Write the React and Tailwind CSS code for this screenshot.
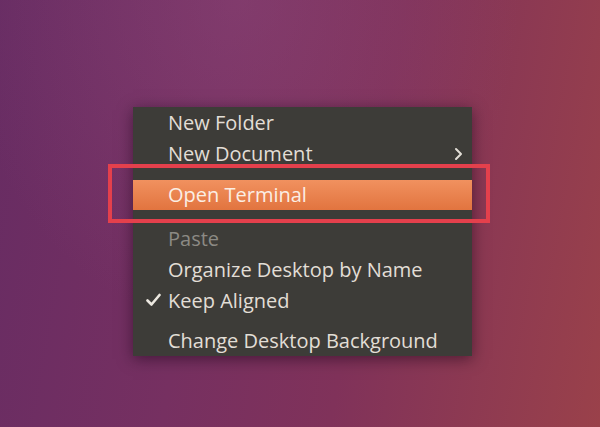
import React from "react";

const Item = ({ label, disabled, checked, submenu, active }) => {
  return (
    <div
      className={
        "relative flex items-center pl-[35px] pr-[10px] " +
        (active
          ? "h-[30px] bg-[linear-gradient(#f1915f,#e2743f)] text-[#fbeee4]"
          : "h-[31px] " + (disabled ? "text-[#8c8a84]" : "text-[#e2ded6]"))
      }
    >
      {checked && (
        <svg
          className="absolute left-[13px] top-[8px]"
          width="15"
          height="14"
          viewBox="0 0 15 14"
        >
          <path
            d="M1.5 7.5 L5.5 11.5 L13.5 2"
            fill="none"
            stroke="#ece8e0"
            strokeWidth="2.6"
            strokeLinecap="round"
            strokeLinejoin="round"
          />
        </svg>
      )}
      <span className="flex-1 whitespace-nowrap">{label}</span>
      {submenu && (
        <svg width="9" height="14" viewBox="0 0 9 14" className="mr-[-1px]">
          <path
            d="M2 2 L7 7 L2 12"
            fill="none"
            stroke="#e2ded6"
            strokeWidth="2"
            strokeLinecap="round"
            strokeLinejoin="round"
          />
        </svg>
      )}
    </div>
  );
};

export default function App() {
  return (
    <div
      className="w-[600px] h-[427px] overflow-hidden pl-[133px] pt-[107px] bg-[radial-gradient(ellipse_at_40%_0%,rgba(150,80,130,0.35),transparent_55%),linear-gradient(100deg,#672c63_0%,#763061_35%,#80325a_60%,#9a414a_100%)]"
      style={{ fontFamily: '"Open Sans", "Noto Sans", sans-serif' }}
    >
      <div className="relative w-[339px] bg-[#3d3c38] text-[20px] leading-none shadow-[0_3px_14px_rgba(20,0,20,0.5)]">
        <Item label="New Folder" />
        <Item label="New Document" submenu />
        <div className="h-[11px]" />
        <Item label="Open Terminal" active />
        <div className="h-[13px]" />
        <Item label="Paste" disabled />
        <Item label="Organize Desktop by Name" />
        <Item label="Keep Aligned" checked />
        <div className="h-[9px]" />
        <Item label="Change Desktop Background" />

        <div className="absolute left-[-25px] top-[57px] w-[382px] h-[59px] border-[4px] border-[#e4404c] pointer-events-none" />
      </div>
    </div>
  );
}
